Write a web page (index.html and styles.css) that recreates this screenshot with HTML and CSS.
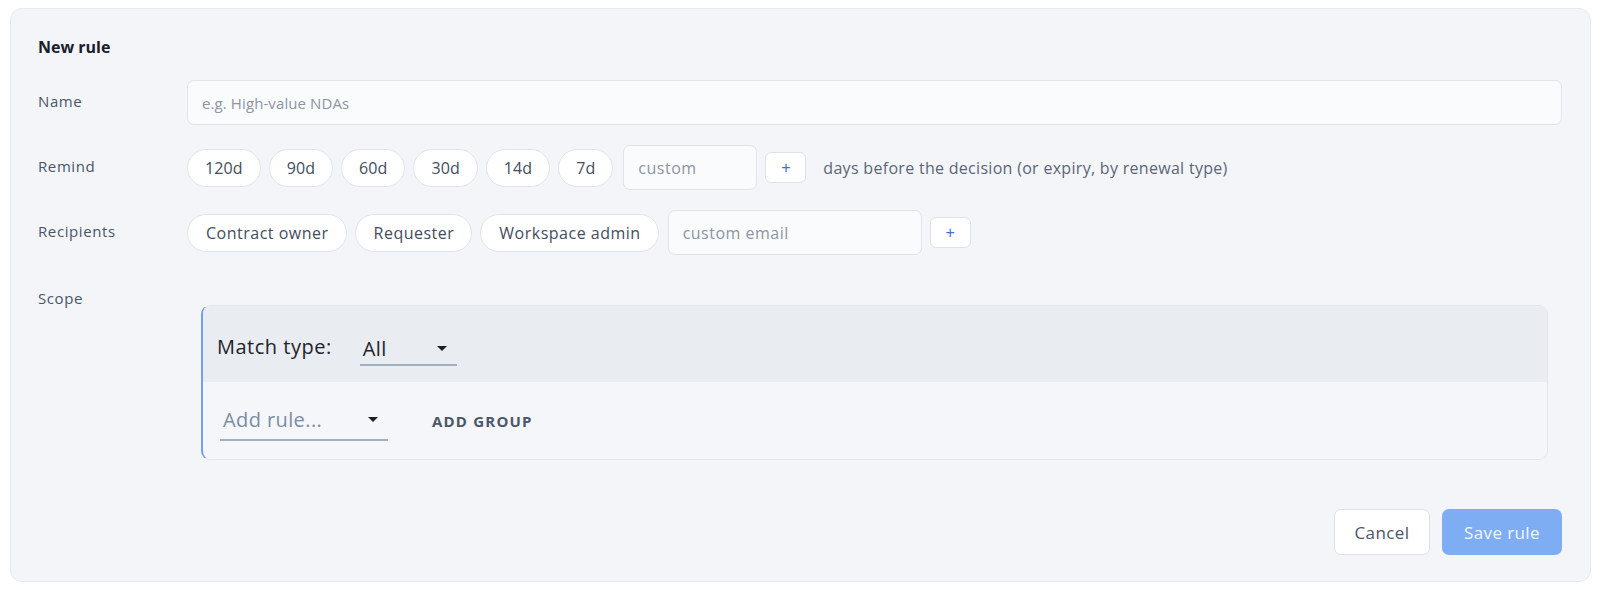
FILE: index.html
```html
<!DOCTYPE html>
<html lang="en">
<head>
  <meta charset="UTF-8" />
  <title>New rule</title>
  <link rel="stylesheet" href="styles.css">
</head>
<body>

  <!-- New reminder rule form -->
  <div class="rule-card">
    <div class="rule-title">New rule</div>

    <div class="rule-form">
      <div class="field-label">Name</div>
      <div class="field-control">
        <input class="text-input name-input" type="text" placeholder="e.g. High-value NDAs">
      </div>

      <div class="field-label">Remind</div>
      <div class="field-control">
        <button class="chip chip-days">120d</button>
        <button class="chip chip-days">90d</button>
        <button class="chip chip-days">60d</button>
        <button class="chip chip-days">30d</button>
        <button class="chip chip-days">14d</button>
        <button class="chip chip-days">7d</button>
        <input class="text-input days-input" type="text" placeholder="custom">
        <button class="add-btn">+</button>
        <span class="hint">days before the decision (or expiry, by renewal type)</span>
      </div>

      <div class="field-label">Recipients</div>
      <div class="field-control">
        <button class="chip">Contract owner</button>
        <button class="chip">Requester</button>
        <button class="chip">Workspace admin</button>
        <input class="text-input email-input" type="text" placeholder="custom email">
        <button class="add-btn">+</button>
      </div>

      <div class="field-label scope-label">Scope</div>
      <div class="field-control scope-control">
        <div class="query-builder">
          <div class="qb-header">
            <span class="qb-match">Match type:</span>
            <div class="qb-select match-select">
              <span>All</span>
              <span class="caret"></span>
            </div>
          </div>
          <div class="qb-body">
            <div class="qb-select rule-select">
              <span>Add rule...</span>
              <span class="caret"></span>
            </div>
            <button class="add-group">ADD GROUP</button>
          </div>
        </div>
      </div>
    </div>

    <div class="rule-actions">
      <button class="btn btn-cancel">Cancel</button>
      <button class="btn btn-save">Save rule</button>
    </div>
  </div>

</body>
</html>
```

FILE: styles.css
```css
body {
  margin: 0;
  background: #ffffff;
  font-family: "Open Sans", "Noto Sans", sans-serif;
  color: #1f2733;
}

.rule-card {
  margin: 8px 9px 8px 10px;
  height: 574px;
  box-sizing: border-box;
  background: #f3f5f8;
  border: 1px solid #e6e9ee;
  border-radius: 12px;
  padding: 27px 28px 26px 27px;
  display: flex;
  flex-direction: column;
}

.rule-title {
  font-size: 16px;
  font-weight: 700;
  line-height: 22px;
  color: #1a202b;
  margin-bottom: 22px;
}

.rule-form {
  display: grid;
  grid-template-columns: 149px 1fr;
  row-gap: 20px;
  align-items: center;
}

.field-label {
  font-size: 15px;
  letter-spacing: 0.6px;
  color: #4a5569;
  padding-bottom: 3px;
}

.field-control {
  display: flex;
  align-items: center;
  gap: 8px;
}

.text-input {
  box-sizing: border-box;
  height: 45px;
  border: 1px solid #e0e4ea;
  border-radius: 7px;
  background: #fafbfc;
  font-family: inherit;
  font-size: 16px;
  letter-spacing: 0.5px;
  color: #2d3748;
  padding: 0 14px;
  outline: none;
}

.text-input::placeholder {
  color: #8c95a3;
}

.name-input {
  flex: 1;
  font-size: 15px;
  letter-spacing: 0.1px;
}

.days-input {
  width: 134px;
  margin-left: 2px;
}

.email-input {
  width: 254px;
  margin-left: 1px;
}

.chip {
  height: 38px;
  padding: 0 17px 0 18px;
  border: 1px solid #e1e5ea;
  border-radius: 19px;
  background: #ffffff;
  font-family: inherit;
  font-size: 16px;
  letter-spacing: 0.5px;
  color: #434d5d;
  cursor: pointer;
}

.chip-days {
  padding: 0 17px;
  letter-spacing: 0.1px;
}

.add-btn {
  width: 41px;
  height: 31px;
  border: 1px solid #dde2e8;
  border-radius: 6px;
  background: #ffffff;
  color: #3a6fd8;
  font-size: 16px;
  line-height: 1;
  padding: 0;
  cursor: pointer;
}

.hint {
  font-size: 16px;
  letter-spacing: 0.3px;
  color: #5b6678;
  margin-left: 9px;
}

.scope-label {
  align-self: start;
  margin-top: 13px;
}

.scope-control {
  padding: 30px 14px 0 14px;
}

.query-builder {
  flex: 1;
  border: 1px solid #e3e7ec;
  border-left: 2px solid #72a2ea;
  border-radius: 9px;
  overflow: hidden;
  background: #f4f6f9;
}

.qb-header {
  height: 76px;
  background: #e9ecf0;
  display: flex;
  align-items: center;
  padding-left: 14px;
}

.qb-match {
  font-size: 20px;
  letter-spacing: 0.5px;
  color: #1f2329;
  margin-right: 28px;
  margin-top: 5px;
}

.qb-select {
  display: flex;
  align-items: center;
  justify-content: space-between;
  border-bottom: 2px solid #a3afc0;
  font-size: 20px;
  letter-spacing: 0.4px;
  box-sizing: border-box;
}

.match-select {
  width: 97px;
  height: 34px;
  margin-top: 10px;
  padding: 0 10px 0 3px;
  color: #1f2329;
}

.rule-select {
  width: 168px;
  height: 40px;
  padding: 0 10px 0 3px;
  color: #7d8ca5;
}

.caret {
  width: 0;
  height: 0;
  border-left: 5px solid transparent;
  border-right: 5px solid transparent;
  border-top: 5px solid #1c1f24;
}

.qb-body {
  height: 77px;
  display: flex;
  align-items: center;
  padding-left: 17px;
}

.add-group {
  margin-left: 44px;
  border: none;
  background: none;
  font-family: inherit;
  font-size: 15px;
  font-weight: 700;
  letter-spacing: 1.2px;
  color: #4b5669;
  padding: 0;
}

.rule-actions {
  margin-top: auto;
  display: flex;
  justify-content: flex-end;
  gap: 12px;
}

.btn {
  height: 46px;
  border-radius: 7px;
  font-family: inherit;
  font-size: 17px;
  letter-spacing: 0.4px;
  cursor: pointer;
}

.btn-cancel {
  width: 96px;
  border: 1px solid #dde2e8;
  background: #ffffff;
  color: #4b5669;
}

.btn-save {
  width: 120px;
  border: none;
  background: #7eadf3;
  color: #f3f7fe;
}
```
